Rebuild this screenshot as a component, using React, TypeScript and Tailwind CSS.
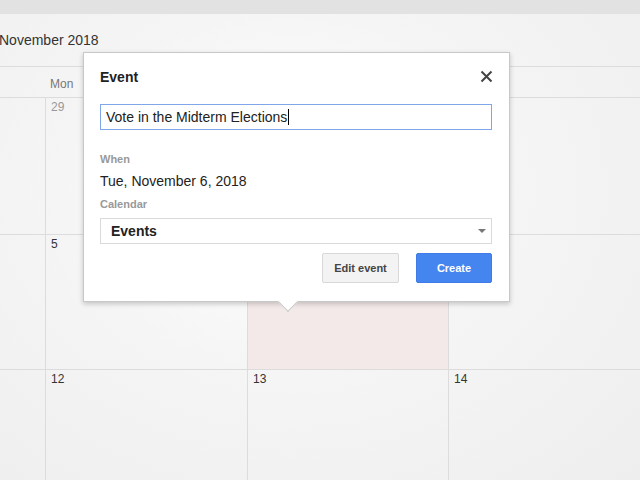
import React from 'react';

const font = { fontFamily: '"Liberation Sans", Arial, sans-serif' };

const CloseIcon = () => (
  <svg width="13" height="13" viewBox="0 0 13 13">
    <path d="M1.5 1.5 L11.5 11.5 M11.5 1.5 L1.5 11.5" stroke="#444" strokeWidth="2" />
  </svg>
);

const EventPopup = () => {
  return (
    <div className="absolute left-[83px] top-[52px] w-[427px] h-[250px] bg-white border border-[#c8c8c8] shadow-[0_2px_5px_rgba(0,0,0,0.2)] pl-[16px] pr-[17px] pt-[15px]">
      {/* header */}
      <div className="flex items-center justify-between h-[19px]">
        <span className="text-[14px] font-bold text-[#222]">Event</span>
        <span className="mr-[-1px] mt-[-2px]"><CloseIcon /></span>
      </div>

      <div className="mt-[17px] h-[26px] border border-[#7fa6e8] flex items-center pl-[5px] text-[14px] text-[#222]">
        Vote in the Midterm Elections
        <span className="inline-block w-px h-[16px] bg-black ml-px" />
      </div>

      <div className="mt-[23px] text-[11px] leading-[13px] font-bold text-[#999]">When</div>
      <div className="mt-[7px] text-[14px] leading-[17px] text-[#222]">Tue, November 6, 2018</div>
      <div className="mt-[8px] text-[11px] leading-[13px] font-bold text-[#999]">Calendar</div>

      <div className="mt-[7px] h-[26px] border border-[#dadada] flex items-center justify-between pl-[10px] pr-[5px]">
        <span className="text-[14px] font-bold text-[#222]">Events</span>
        <span className="w-0 h-0 border-l-[4px] border-r-[4px] border-t-[4px] border-l-transparent border-r-transparent border-t-[#777]" />
      </div>

      <div className="mt-[9px] flex justify-end gap-[17px]">
        <button className="w-[77px] h-[30px] rounded-[2px] border border-[#d8d8d8] bg-[#f3f3f3] text-[11px] font-bold text-[#444]">
          Edit event
        </button>
        <button className="w-[76px] h-[30px] rounded-[2px] border border-[#3f7ce8] bg-[#4585ef] text-[11px] font-bold text-white">
          Create
        </button>
      </div>

      {/* pointer */}
      <div className="absolute left-[197px] bottom-[-8px] w-[14px] h-[14px] rotate-45 bg-white border-r border-b border-[#c8c8c8]" />
    </div>
  );
};

export default function App() {
  const cols = 'grid grid-cols-[45px_202px_201px_1fr]';
  const cell = 'border-l border-[#dcdcdc] pl-[5px] pt-[2px] text-[12px] leading-[14px]';

  return (
    <div
      style={font}
      className="relative w-[640px] h-[480px] overflow-hidden bg-[#f1f1f1] bg-[radial-gradient(ellipse_at_45%_40%,#ffffff_0%,#f5f5f5_45%,#eeeeee_100%)]"
    >
      <div className="h-[14px] bg-[#e2e2e2]" />
      <div className="h-[52px] flex items-center">
        <span className="text-[14px] text-[#333] -ml-[1px]">November 2018</span>
      </div>

      <div className="border-t border-[#dcdcdc]">
        {/* weekday header */}
        <div className={`${cols} h-[31px] border-b border-[#dcdcdc]`}>
          <div />
          <div className="pl-[5px] pt-[8px] text-[12px] text-[#777]">Mon</div>
          <div />
          <div />
        </div>

        <div className={`${cols} h-[136px]`}>
          <div />
          <div className={`${cell} text-[#999]`}>29</div>
          <div className={cell} />
          <div className={cell} />
        </div>

        <div className={`${cols} h-[135px] border-t border-[#dcdcdc]`}>
          <div />
          <div className={`${cell} text-[#333]`}>5</div>
          <div className={`${cell} bg-[#f4e9e9]`} />
          <div className={cell} />
        </div>

        <div className={`${cols} h-[120px] border-t border-[#dcdcdc]`}>
          <div />
          <div className={`${cell} text-[#333]`}>12</div>
          <div className={`${cell} text-[#333]`}>13</div>
          <div className={`${cell} text-[#333]`}>14</div>
        </div>
      </div>

      <EventPopup />
    </div>
  );
}
